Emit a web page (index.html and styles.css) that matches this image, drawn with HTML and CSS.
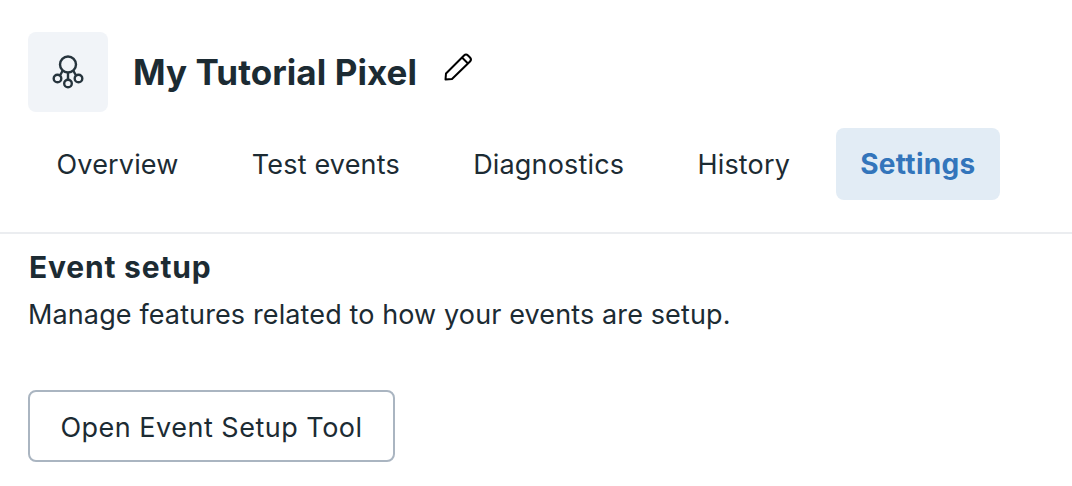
FILE: index.html
```html
<!DOCTYPE html>
<html lang="en">
<head>
<meta charset="utf-8">
<title>My Tutorial Pixel</title>
<link rel="stylesheet" href="styles.css">
</head>
<body>
<header class="top">
  <div class="title-row">
    <div class="pixel-icon">
      <svg width="34" height="34" viewBox="0 0 34 34" fill="none" stroke="#26343d" stroke-width="2.400"><circle cx="17" cy="9.500" r="8"/><circle cx="6.500" cy="23.500" r="3.800"/><circle cx="17" cy="28.500" r="3.800"/><circle cx="27.500" cy="23.500" r="3.800"/><path d="M17 17.500V24.700M11.500 16 9 20.500M22.500 16 25 20.500"/></svg>
    </div>
    <h1 class="title">My Tutorial Pixel</h1>
    <svg class="pencil" width="32" height="32" viewBox="0 0 32 32" fill="none" stroke="#000" stroke-width="2" stroke-linejoin="round"><path d="M3.500 28.500 4 22.500 22 4.500Q24 2.500 26 4.500L28 6.500Q30 8.500 28 10.500L10 28Z"/><path d="M20 6.500 26 12.500"/></svg>
  </div>
  <nav class="tabs">
    <a class="tab">Overview</a>
    <a class="tab">Test events</a>
    <a class="tab">Diagnostics</a>
    <a class="tab">History</a>
    <a class="tab active">Settings</a>
  </nav>
</header>
<main class="content">
  <h2 class="heading">Event setup</h2>
  <p class="desc">Manage features related to how your events are setup.</p>
  <button class="btn">Open Event Setup Tool</button>
</main>
</body>
</html>
```

FILE: styles.css
```css
* { box-sizing: border-box; }
html, body { margin: 0; background: #fff; }
body {
  width: 1072px;
  height: 486px;
  overflow: hidden;
  font-family: Inter, "Liberation Sans", sans-serif;
  color: #1c2b33;
}
.top {
  padding: 32px 28px 0;
  height: 234px;
  border-bottom: 2px solid #ebedf0;
}
.title-row { display: flex; align-items: center; height: 80px; }
.pixel-icon {
  width: 80px;
  height: 80px;
  background: #f1f4f8;
  border-radius: 8px;
  display: flex;
  align-items: center;
  justify-content: center;
}
.title {
  margin: 0 0 0 25px;
  font-size: 35px;
  font-weight: 700;
  line-height: 80px;
  letter-spacing: 0.06px;
}
.pencil { margin: -10px 0 0 25px; }
.tabs { display: flex; gap: 16.300px; margin-top: 16px; }
.tab {
  height: 72px;
  padding: 0 28.500px;
  display: flex;
  align-items: center;
  font-size: 27px;
  letter-spacing: 0.17px;
  border-radius: 8px;
}
.active {
  background: #e2ecf5;
  color: #3375bb;
  font-weight: 700;
  font-size: 28px;
  letter-spacing: 0.3px;
  padding: 0;
  width: 164px;
  margin-left: 1px;
  justify-content: center;
}
.content { padding: 0 28px; }
.heading {
  margin: 15px 0 0 1px;
  font-size: 30px;
  line-height: 36px;
  font-weight: 700;
  letter-spacing: 0.8px;
}
.desc {
  margin: 12px 0 0;
  font-size: 27px;
  line-height: 36px;
  letter-spacing: 0.12px;
}
.btn {
  display: block;
  margin-top: 57px;
  width: 367px;
  height: 72px;
  background: #fff;
  border: 2px solid #aab5c1;
  border-radius: 8px;
  font-family: inherit;
  font-size: 27px;
  letter-spacing: 0.5px;
  color: #1c2b33;
  padding: 3px 0 0;
}
```
